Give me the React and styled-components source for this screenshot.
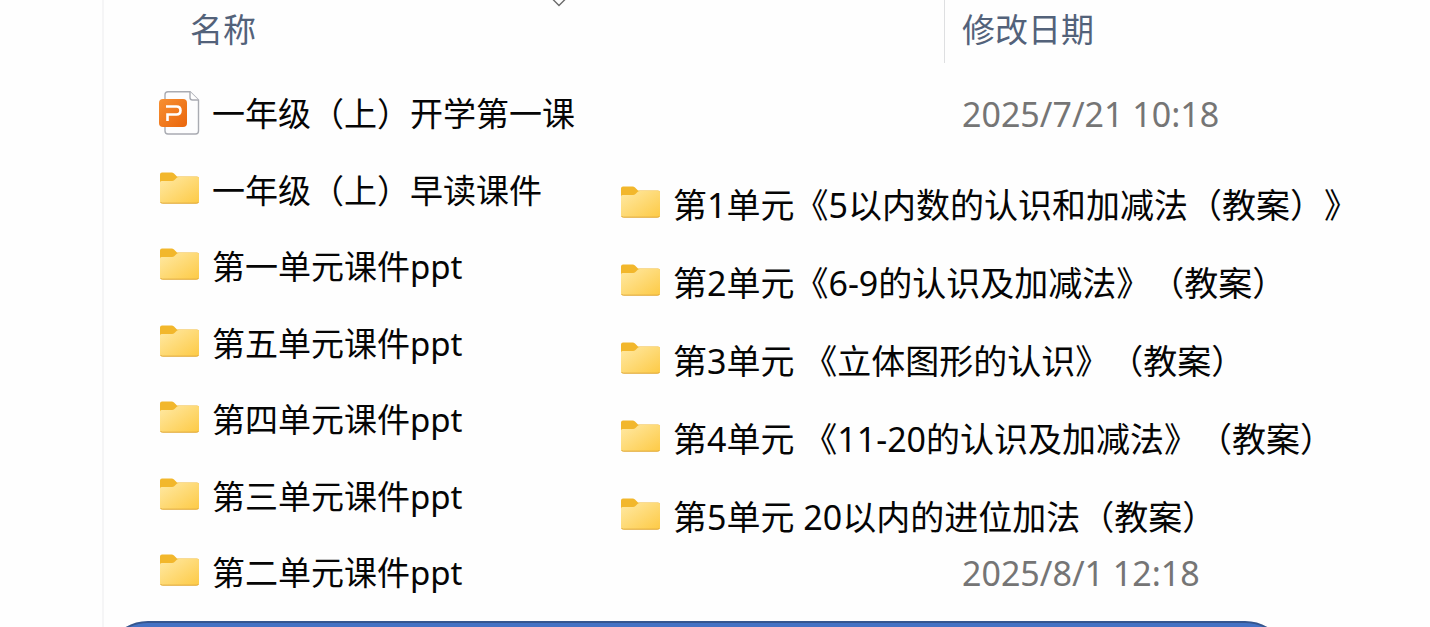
import React from 'react';
import styled, { createGlobalStyle } from 'styled-components';

const GlobalStyle = createGlobalStyle`
  body {
    margin: 0;
    background: #fefefe;
    color: #050505;
    font-family: 'Noto Sans', 'Noto Sans CJK SC', sans-serif;
    text-spacing-trim: space-all;
  }
`;

const Page = styled.div`
  display: flex;
  height: 100vh;
  padding-left: 102px;
  overflow: hidden;
`;

const Pane = styled.main`
  position: relative;
  flex: 1;
  border-left: 2px solid #f5f5f6;
`;

const FileTable = styled.table`
  width: 100%;
  table-layout: fixed;
  border-collapse: collapse;
`;

const HeadCell = styled.th`
  width: ${props => props.$width || 'auto'};
  padding: 0 0 13px ${props => props.$indent || 0};
  text-align: left;
  font-weight: normal;
`;

const HeadLabel = styled.div`
  position: relative;
  box-sizing: border-box;
  height: 63px;
  padding-left: 17px;
  border-left: 1px solid ${props => (props.$divided ? '#dedfe1' : 'transparent')};
  color: #53627a;
  font-size: 33px;
  line-height: 60px;
`;

const SortMark = styled.svg`
  position: absolute;
  top: 0;
  left: 50%;
  margin-left: -8px;
`;

const Row = styled.tr`
  height: 76px;

  &:nth-child(even) {
    height: 77px;
  }
`;

const NameCell = styled.td`
  padding: 0 0 0 55px;
`;

const DateCell = styled.td`
  padding: 0 0 0 18px;
  color: #757575;
  font-size: 34px;
  line-height: 48px;
  white-space: nowrap;
`;

const Entry = styled.div`
  display: flex;
  align-items: center;
  gap: 12px;
  font-size: ${props => props.$size};
  line-height: 48px;
  white-space: nowrap;

  svg {
    flex: none;
  }
`;

// second window, lies over the date column
const LessonList = styled.ul`
  position: absolute;
  top: 166px;
  left: 516px;
  margin: 0;
  padding: 0;
  list-style: none;
`;

const Lesson = styled.li`
  display: flex;
  align-items: center;
  height: 78px;
`;

const Banner = styled.div`
  box-sizing: border-box;
  height: 100px;
  margin: 10px 141px 0 0;
  border: 2px solid #35568f;
  border-radius: 44px;
  background: #4472c4;
`;

function FolderIcon() {
  return (
    <svg width="41" height="44" viewBox="0 0 41 44" aria-hidden="true">
      <defs>
        <linearGradient id="folder" x1="0" y1="0" x2="1" y2="1">
          <stop offset="0" stopColor="#ffe9a4" />
          <stop offset="1" stopColor="#fdca45" />
        </linearGradient>
      </defs>
      <path
        d="M1 5.5Q1 3.5 3 3.5H12.5Q14 3.5 15 4.5L18 7.5H38Q40 7.5 40 9.5V20H1Z"
        fill="#f2b72c"
      />
      <path
        d="M1 13.5Q1 12 2.5 12H13Q14.5 12 15.5 11L17.5 9Q18.5 8 20 8H38.5Q40 8 40 9.5V32.5Q40 34.5 38 34.5H3Q1 34.5 1 32.5Z"
        fill="url(#folder)"
      />
      <path d="M1.5 33Q2 34.2 3.5 34.2H37.5Q39 34.2 39.5 33" fill="none" stroke="#dfa93d" />
    </svg>
  );
}

function SlidesIcon() {
  return (
    <svg width="41" height="46" viewBox="0 1 41 46" aria-hidden="true">
      <defs>
        <linearGradient id="slides" x1="0" y1="0" x2="1" y2="1">
          <stop offset="0" stopColor="#f79032" />
          <stop offset="1" stopColor="#ea650c" />
        </linearGradient>
      </defs>
      <path
        d="M9 1.7H31L39.5 10V41Q39.5 44 36.5 44H9Q6 44 6 41V4.7Q6 1.7 9 1.7Z"
        fill="#fdfdfe"
        stroke="#a9abb2"
        strokeWidth="1.4"
      />
      <path d="M31 1.7V7.5Q31 10 33.5 10H39.5" fill="#fff" stroke="#a9abb2" strokeWidth="1.4" />
      <rect x="0" y="9" width="28" height="28" rx="4" fill="url(#slides)" />
      <path
        d="M7 16.5H17.5Q21.5 16.5 21.5 20.5T17.5 24.5H8.5V31"
        fill="none"
        stroke="#fff"
        strokeWidth="2.6"
      />
    </svg>
  );
}

const files = [
  { name: '一年级（上）开学第一课', date: '2025/7/21 10:18', slides: true },
  { name: '一年级（上）早读课件' },
  { name: '第一单元课件ppt' },
  { name: '第五单元课件ppt' },
  { name: '第四单元课件ppt' },
  { name: '第三单元课件ppt' },
  { name: '第二单元课件ppt', date: '2025/8/1 12:18' },
];

const lessons = [
  '第1单元《5以内数的认识和加减法（教案）》',
  '第2单元《6-9的认识及加减法》（教案）',
  '第3单元 《立体图形的认识》（教案）',
  '第4单元 《11-20的认识及加减法》（教案）',
  '第5单元 20以内的进位加法（教案）',
];

export default function App() {
  return (
    <Page>
      <GlobalStyle />
      <Pane>
        <FileTable>
          <thead>
            <tr>
              <HeadCell $width="772px" $indent="68px">
                <HeadLabel>
                  名称
                  <SortMark width="16" height="8" viewBox="0 0 16 8" aria-hidden="true">
                    <path d="M1.5 -1L8 5.5L14.5 -1" fill="none" stroke="#6b6b6b" strokeWidth="1.4" />
                  </SortMark>
                </HeadLabel>
              </HeadCell>
              <HeadCell>
                <HeadLabel $divided>修改日期</HeadLabel>
              </HeadCell>
            </tr>
          </thead>
          <tbody>
            {files.map(file => (
              <Row key={file.name}>
                <NameCell>
                  <Entry $size="33px">
                    {file.slides ? <SlidesIcon /> : <FolderIcon />}
                    {file.name}
                  </Entry>
                </NameCell>
                <DateCell>{file.date}</DateCell>
              </Row>
            ))}
          </tbody>
        </FileTable>
        <Banner />
        <LessonList>
          {lessons.map(lesson => (
            <Lesson key={lesson}>
              <Entry $size="34px">
                <FolderIcon />
                {lesson}
              </Entry>
            </Lesson>
          ))}
        </LessonList>
      </Pane>
    </Page>
  );
}
